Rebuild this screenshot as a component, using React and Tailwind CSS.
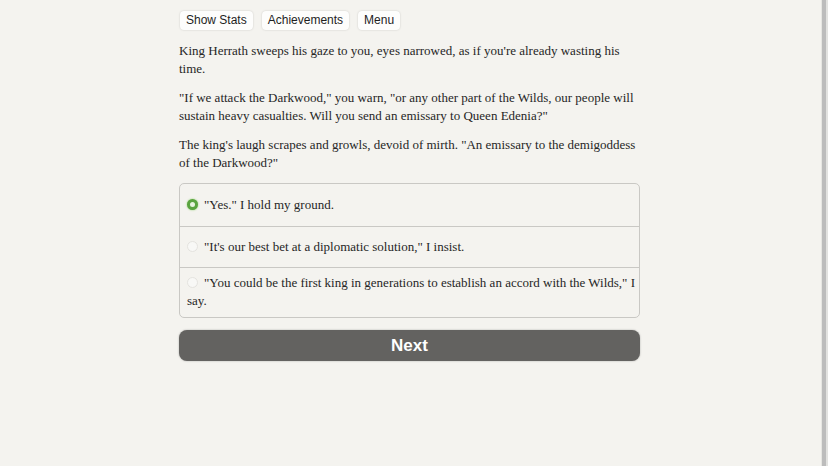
const choices = [
  { text: '"Yes." I hold my ground.', checked: true, pad: 'py-[12px]' },
  { text: '"It\'s our best bet at a diplomatic solution," I insist.', pad: 'py-[11px] border-t border-[#c9c8c4]' },
  {
    text: '"You could be the first king in generations to establish an accord with the Wilds," I say.',
    pad: 'pt-[6px] pb-[7px] border-t border-[#c9c8c4]',
  },
]

function Radio({ checked }) {
  if (checked) {
    return (
      <span className="mr-[6px] inline-block h-[11px] w-[11px] translate-y-[1px] rounded-full border-[3px] border-[#5aa33f] bg-[#e8f3df] shadow-[0_0_2px_#8fd06f]" />
    )
  }
  return (
    <span className="mr-[6px] inline-block h-[11px] w-[11px] translate-y-[1px] rounded-full border border-[#e4e3df] bg-[#f8f8f6]" />
  )
}

export default function App() {
  return (
    <div className="flex h-[466px] w-full bg-[#f4f3ef] text-[#262626]">
      <main className="flex-1">
        <div className="ml-[179px] w-[461px] pt-[11px]">
          <div className="flex gap-[9px] pl-[1px] font-['Liberation_Sans',sans-serif] text-[12px]">
            {['Show Stats', 'Achievements', 'Menu'].map((b) => (
              <button
                key={b}
                className="h-[19px] rounded-[4px] bg-[#fdfdfc] px-[6px] leading-[19px] text-[#1e1e1e] shadow-[0_0_2px_rgba(0,0,0,0.18)]"
              >
                {b}
              </button>
            ))}
          </div>
          <div className="mt-[12px] font-['Liberation_Serif',serif] text-[13px] leading-[18px]">
            <p>King Herrath sweeps his gaze to you, eyes narrowed, as if you're already wasting his time.</p>
            <p className="mt-[11px]">
              "If we attack the Darkwood," you warn, "or any other part of the Wilds, our people will sustain heavy casualties. Will you send an emissary to Queen Edenia?"
            </p>
            <p className="mt-[11px]">
              The king's laugh scrapes and growls, devoid of mirth. "An emissary to the demigoddess of the Darkwood?"
            </p>
            <div className="mt-[11px] overflow-hidden rounded-[5px] border border-[#c9c8c4]">
              {choices.map((c, i) => (
                <div key={i} className={'pl-[7px] pr-[4px] ' + c.pad}>
                  <Radio checked={c.checked} />
                  {c.text}
                </div>
              ))}
            </div>
          </div>
          <button className="mt-[12px] h-[31px] w-full rounded-[8px] bg-[#636260] font-['Liberation_Sans',sans-serif] text-[17px] font-bold text-white shadow-[0_0_2px_rgba(0,0,0,0.3)]">
            Next
          </button>
        </div>
      </main>
      <div className="w-px bg-[#e6e6e2]" />
      <div className="w-[4px] bg-[#bcbcbc]" />
      <div className="w-[2px] bg-[#e2e2e0]" />
    </div>
  )
}
